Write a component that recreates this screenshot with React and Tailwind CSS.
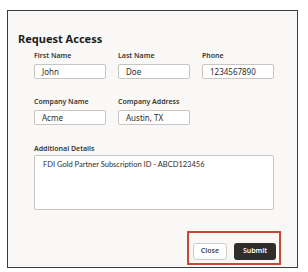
import React from 'react';

const Field = ({ label, value }) => (
    <div className="flex flex-col w-[72px]">
        <label className="text-[7px] leading-[9px] font-semibold text-[#3a3631] mb-[4px] whitespace-nowrap">{label}</label>
        <div className="h-[15px] bg-white border border-[#c9c6c2] rounded-[2px] px-[7px] flex items-center text-[8px] text-[#2f2c29] whitespace-nowrap">
            {value}
        </div>
    </div>
);

const App = () => {
    return (
        <div className="w-[308px] h-[272px] bg-white pt-[10px] pl-[7px]" style={{ fontFamily: '"Noto Sans", sans-serif' }}>
            <div className="w-[291px] h-[258px] border border-[#3b3b3b] bg-[#f9f8f6] flex flex-col">
                <h2 className="mt-[21px] ml-[10px] text-[11px] leading-[14px] font-bold text-[#1f1d1b]">Request Access</h2>

                <div className="ml-[26px] mt-[5px] flex flex-col">
                    <div className="flex gap-[12px]">
                        <Field label="First Name" value="John" />
                        <Field label="Last Name" value="Doe" />
                        <Field label="Phone" value="1234567890" />
                    </div>
                    <div className="flex gap-[12px] mt-[18px]">
                        <Field label="Company Name" value="Acme" />
                        <Field label="Company Address" value="Austin, TX" />
                    </div>
                    <div className="flex flex-col mt-[19px] w-[240px]">
                        <label className="text-[7px] leading-[9px] font-semibold text-[#3a3631] mb-[2px]">Additional Details</label>
                        <div className="h-[55px] bg-white border border-[#c9c6c2] rounded-[2px] px-[8px] pt-[3px] font-['Lato',sans-serif] text-[7.5px] leading-[12px] text-[#2f2c29] whitespace-nowrap">
                            FDI Gold Partner Subscription ID - ABCD123456
                        </div>
                    </div>
                </div>

                <div className="flex justify-end mt-[21px] mr-[16px]">
                    <div className="w-[94px] h-[34px] border-[2px] border-[#c74634] flex items-end justify-end gap-[7px] pr-[3px] pb-[3px]">
                        <button className="w-[34px] h-[17px] bg-white border border-[#cfccc8] rounded-[3px] text-[7px] font-semibold text-[#4a4642]">Close</button>
                        <button className="w-[42px] h-[17px] bg-[#312d2a] rounded-[3px] text-[7px] font-semibold text-white">Submit</button>
                    </div>
                </div>
            </div>
        </div>
    );
};

export default App;
